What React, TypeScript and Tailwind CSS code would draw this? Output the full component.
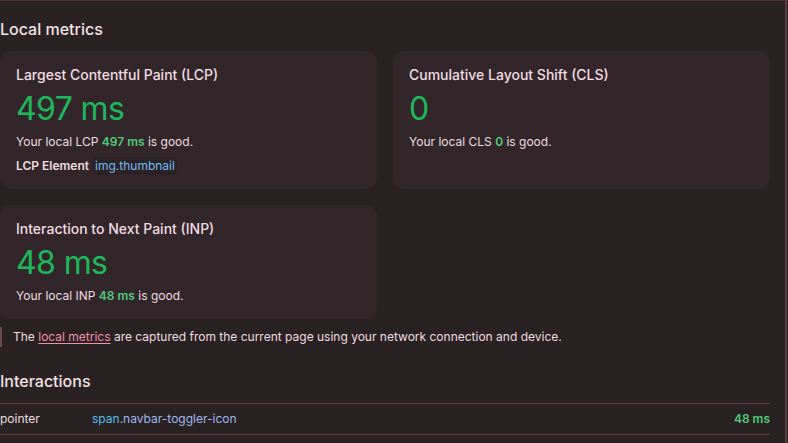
const font = { fontFamily: "Inter, 'Noto Sans', sans-serif" };

interface MetricCardProps {
  title: string;
  value: string;
  abbr: string;
  element?: string;
}

const metrics: MetricCardProps[] = [
  { title: "Largest Contentful Paint (LCP)", value: "497 ms", abbr: "LCP", element: "img.thumbnail" },
  { title: "Cumulative Layout Shift (CLS)", value: "0", abbr: "CLS" },
  { title: "Interaction to Next Paint (INP)", value: "48 ms", abbr: "INP" },
];

const MetricCard = ({ title, value, abbr, element }: MetricCardProps) => (
  <div className="bg-[#33262a] rounded-[10px] px-4 pt-[14px] pb-[14px] flex flex-col">
    <h3 className="text-[14px] leading-[20px] font-medium text-[#eedde1]">{title}</h3>
    <div className="mt-1 text-[32px] leading-[40px] tracking-[-0.6px] text-[#1fb75c]">{value}</div>
    <p className="mt-1 text-[12px] leading-[18px] text-[#eedde1]">
      Your local {abbr} <span className="font-semibold text-[#4fcb7c]">{value}</span> is good.
    </p>
    {element && (
      <p className="mt-[6px] text-[12px] leading-[18px] text-[#eedde1] flex items-center gap-[4px]">
        <span className="font-semibold">LCP Element</span>
        <span className="bg-[#2c2225] px-[2px] rounded-[3px] text-[#72bdf2]">{element}</span>
      </p>
    )}
  </div>
);

export default function App() {
  return (
    <div className="w-[788px] h-[443px] overflow-hidden bg-[#2a2123] border-t border-[#4d3139]" style={font}>
      <div className="flex h-full">
        <div className="w-[770px] shrink-0 pt-[16px]">
          <h2 className="text-[16px] leading-[24px] font-medium text-[#f1e1e5]">Local metrics</h2>
          <div className="mt-[10px] grid grid-cols-2 gap-4">
            {metrics.map((m, i) => (
              <MetricCard key={i} {...m} />
            ))}
          </div>
          <p className="mt-[8px] border-l-2 border-[#6a4b53] pl-[11px] text-[12px] leading-[20px] text-[#eedde1]">
            The <a className="text-[#f28fab] underline underline-offset-2">local metrics</a> are captured from the current page using your network connection and device.
          </p>
          <h2 className="mt-[22px] text-[16px] leading-[24px] font-medium text-[#f1e1e5]">Interactions</h2>
          <div className="mt-[10px] border-t border-b border-[#5a3f46] flex items-center h-[32px] text-[12px]">
            <span className="w-[92px] text-[#eedde1]">pointer</span>
            <span className="flex-1">
              <span className="text-[#52c0e8]">span</span>
              <span className="text-[#9db8f0]">.navbar-toggler-icon</span>
            </span>
            <span className="font-semibold text-[#4fcb7c]">48 ms</span>
          </div>
        </div>
        <div className="flex-1" />
        <div className="w-[2px] bg-[#5a3f48] mr-[1px]" />
      </div>
    </div>
  );
}
